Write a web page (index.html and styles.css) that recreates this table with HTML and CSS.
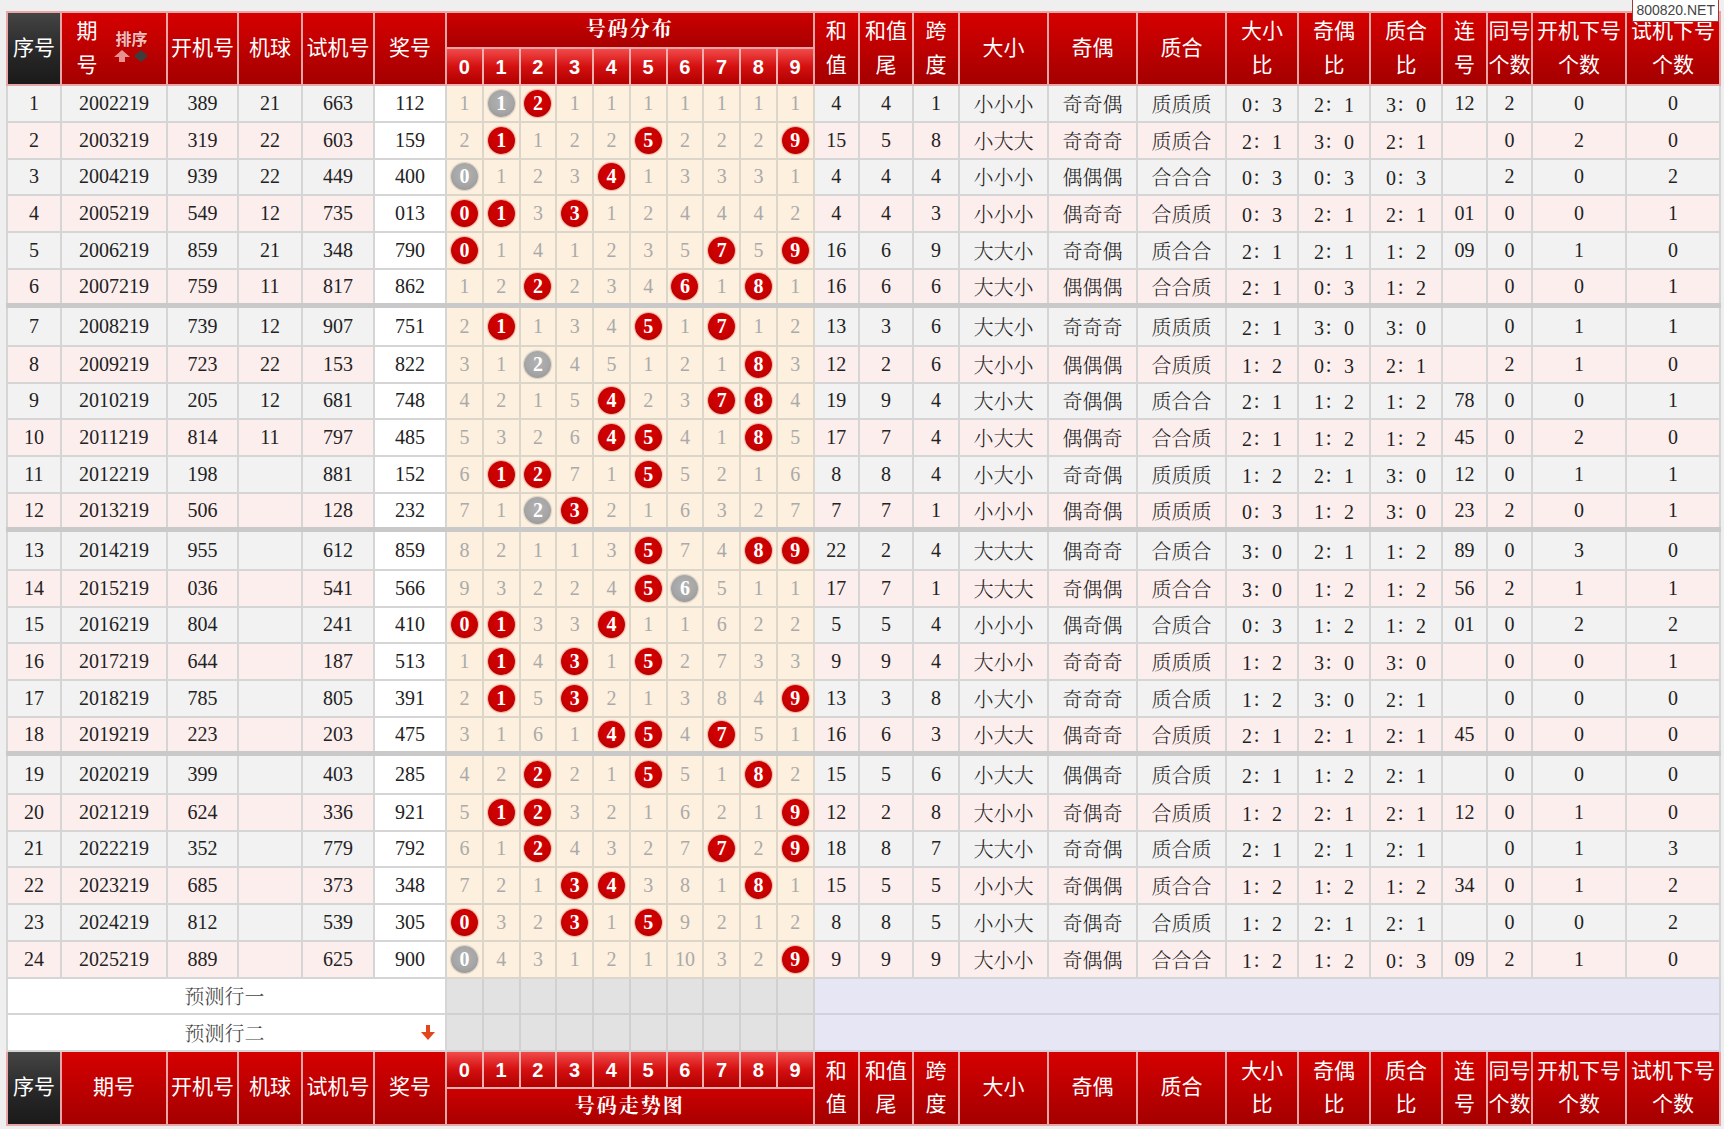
FILE: index.html
```html
<!DOCTYPE html>
<html lang="zh-CN">
<head>
<meta charset="utf-8">
<title>号码走势图</title>
<link rel="stylesheet" href="styles.css">
</head>
<body>
<div class="page">
  <div class="mark">800820.NET</div>
  <table class="chart">
    <colgroup>
      <col style="width:54px"><col style="width:106px"><col style="width:71px"><col style="width:64px"><col style="width:72px"><col style="width:72px">
      <col class="dc"><col class="dc"><col class="dc"><col class="dc"><col class="dc"><col class="dc"><col class="dc"><col class="dc"><col class="dc"><col class="dc">
      <col style="width:45.5px"><col style="width:54px"><col style="width:46px"><col style="width:89px"><col style="width:89px"><col style="width:89px">
      <col style="width:72px"><col style="width:72px"><col style="width:72px"><col style="width:45px"><col style="width:45px"><col style="width:94px"><col style="width:94px">
    </colgroup>
    <thead>
      <tr class="h1">
        <th rowspan="2" class="sn">序号</th>
        <th rowspan="2" class="qh">
          <div class="qh-in">
            <span class="qh-t">期<br>号</span>
            <span class="sort"><b>排序</b>
              <svg width="36" height="13" viewBox="0 0 36 13"><polygon points="0,7 8,0 16,7 11,7 11,12 5,12 5,7" fill="#e89090"/><polygon points="27,0 34,6 27,12 20,6" fill="#3d3d3d"/></svg>
            </span>
          </div>
        </th>
        <th rowspan="2">开机号</th>
        <th rowspan="2">机球</th>
        <th rowspan="2">试机号</th>
        <th rowspan="2">奖号</th>
        <th colspan="10" class="grp">号码分布</th>
        <th rowspan="2">和<br>值</th>
        <th rowspan="2">和值<br>尾</th>
        <th rowspan="2">跨<br>度</th>
        <th rowspan="2">大小</th>
        <th rowspan="2">奇偶</th>
        <th rowspan="2">质合</th>
        <th rowspan="2">大小<br>比</th>
        <th rowspan="2">奇偶<br>比</th>
        <th rowspan="2">质合<br>比</th>
        <th rowspan="2">连<br>号</th>
        <th rowspan="2">同号<br>个数</th>
        <th rowspan="2">开机下号<br>个数</th>
        <th rowspan="2">试机下号<br>个数</th>
      </tr>
      <tr class="h2">
        <th class="dg">0</th><th class="dg">1</th><th class="dg">2</th><th class="dg">3</th><th class="dg">4</th><th class="dg">5</th><th class="dg">6</th><th class="dg">7</th><th class="dg">8</th><th class="dg">9</th>
      </tr>
    </thead>
    <tbody>
      <tr class="r1"><td>1</td><td>2002219</td><td>389</td><td>21</td><td>663</td><td>112</td><td>1</td><td><b class="b g">1</b></td><td><b class="b">2</b></td><td>1</td><td>1</td><td>1</td><td>1</td><td>1</td><td>1</td><td>1</td><td>4</td><td>4</td><td>1</td><td>小小小</td><td>奇奇偶</td><td>质质质</td><td>0：3</td><td>2：1</td><td>3：0</td><td>12</td><td>2</td><td>0</td><td>0</td></tr>
      <tr class="r2"><td>2</td><td>2003219</td><td>319</td><td>22</td><td>603</td><td>159</td><td>2</td><td><b class="b">1</b></td><td>1</td><td>2</td><td>2</td><td><b class="b">5</b></td><td>2</td><td>2</td><td>2</td><td><b class="b">9</b></td><td>15</td><td>5</td><td>8</td><td>小大大</td><td>奇奇奇</td><td>质质合</td><td>2：1</td><td>3：0</td><td>2：1</td><td></td><td>0</td><td>2</td><td>0</td></tr>
      <tr class="r1"><td>3</td><td>2004219</td><td>939</td><td>22</td><td>449</td><td>400</td><td><b class="b g">0</b></td><td>1</td><td>2</td><td>3</td><td><b class="b">4</b></td><td>1</td><td>3</td><td>3</td><td>3</td><td>1</td><td>4</td><td>4</td><td>4</td><td>小小小</td><td>偶偶偶</td><td>合合合</td><td>0：3</td><td>0：3</td><td>0：3</td><td></td><td>2</td><td>0</td><td>2</td></tr>
      <tr class="r2"><td>4</td><td>2005219</td><td>549</td><td>12</td><td>735</td><td>013</td><td><b class="b">0</b></td><td><b class="b">1</b></td><td>3</td><td><b class="b">3</b></td><td>1</td><td>2</td><td>4</td><td>4</td><td>4</td><td>2</td><td>4</td><td>4</td><td>3</td><td>小小小</td><td>偶奇奇</td><td>合质质</td><td>0：3</td><td>2：1</td><td>2：1</td><td>01</td><td>0</td><td>0</td><td>1</td></tr>
      <tr class="r1"><td>5</td><td>2006219</td><td>859</td><td>21</td><td>348</td><td>790</td><td><b class="b">0</b></td><td>1</td><td>4</td><td>1</td><td>2</td><td>3</td><td>5</td><td><b class="b">7</b></td><td>5</td><td><b class="b">9</b></td><td>16</td><td>6</td><td>9</td><td>大大小</td><td>奇奇偶</td><td>质合合</td><td>2：1</td><td>2：1</td><td>1：2</td><td>09</td><td>0</td><td>1</td><td>0</td></tr>
      <tr class="r2"><td>6</td><td>2007219</td><td>759</td><td>11</td><td>817</td><td>862</td><td>1</td><td>2</td><td><b class="b">2</b></td><td>2</td><td>3</td><td>4</td><td><b class="b">6</b></td><td>1</td><td><b class="b">8</b></td><td>1</td><td>16</td><td>6</td><td>6</td><td>大大小</td><td>偶偶偶</td><td>合合质</td><td>2：1</td><td>0：3</td><td>1：2</td><td></td><td>0</td><td>0</td><td>1</td></tr>
      <tr class="r1 gs"><td>7</td><td>2008219</td><td>739</td><td>12</td><td>907</td><td>751</td><td>2</td><td><b class="b">1</b></td><td>1</td><td>3</td><td>4</td><td><b class="b">5</b></td><td>1</td><td><b class="b">7</b></td><td>1</td><td>2</td><td>13</td><td>3</td><td>6</td><td>大大小</td><td>奇奇奇</td><td>质质质</td><td>2：1</td><td>3：0</td><td>3：0</td><td></td><td>0</td><td>1</td><td>1</td></tr>
      <tr class="r2"><td>8</td><td>2009219</td><td>723</td><td>22</td><td>153</td><td>822</td><td>3</td><td>1</td><td><b class="b g">2</b></td><td>4</td><td>5</td><td>1</td><td>2</td><td>1</td><td><b class="b">8</b></td><td>3</td><td>12</td><td>2</td><td>6</td><td>大小小</td><td>偶偶偶</td><td>合质质</td><td>1：2</td><td>0：3</td><td>2：1</td><td></td><td>2</td><td>1</td><td>0</td></tr>
      <tr class="r1"><td>9</td><td>2010219</td><td>205</td><td>12</td><td>681</td><td>748</td><td>4</td><td>2</td><td>1</td><td>5</td><td><b class="b">4</b></td><td>2</td><td>3</td><td><b class="b">7</b></td><td><b class="b">8</b></td><td>4</td><td>19</td><td>9</td><td>4</td><td>大小大</td><td>奇偶偶</td><td>质合合</td><td>2：1</td><td>1：2</td><td>1：2</td><td>78</td><td>0</td><td>0</td><td>1</td></tr>
      <tr class="r2"><td>10</td><td>2011219</td><td>814</td><td>11</td><td>797</td><td>485</td><td>5</td><td>3</td><td>2</td><td>6</td><td><b class="b">4</b></td><td><b class="b">5</b></td><td>4</td><td>1</td><td><b class="b">8</b></td><td>5</td><td>17</td><td>7</td><td>4</td><td>小大大</td><td>偶偶奇</td><td>合合质</td><td>2：1</td><td>1：2</td><td>1：2</td><td>45</td><td>0</td><td>2</td><td>0</td></tr>
      <tr class="r1"><td>11</td><td>2012219</td><td>198</td><td></td><td>881</td><td>152</td><td>6</td><td><b class="b">1</b></td><td><b class="b">2</b></td><td>7</td><td>1</td><td><b class="b">5</b></td><td>5</td><td>2</td><td>1</td><td>6</td><td>8</td><td>8</td><td>4</td><td>小大小</td><td>奇奇偶</td><td>质质质</td><td>1：2</td><td>2：1</td><td>3：0</td><td>12</td><td>0</td><td>1</td><td>1</td></tr>
      <tr class="r2"><td>12</td><td>2013219</td><td>506</td><td></td><td>128</td><td>232</td><td>7</td><td>1</td><td><b class="b g">2</b></td><td><b class="b">3</b></td><td>2</td><td>1</td><td>6</td><td>3</td><td>2</td><td>7</td><td>7</td><td>7</td><td>1</td><td>小小小</td><td>偶奇偶</td><td>质质质</td><td>0：3</td><td>1：2</td><td>3：0</td><td>23</td><td>2</td><td>0</td><td>1</td></tr>
      <tr class="r1 gs"><td>13</td><td>2014219</td><td>955</td><td></td><td>612</td><td>859</td><td>8</td><td>2</td><td>1</td><td>1</td><td>3</td><td><b class="b">5</b></td><td>7</td><td>4</td><td><b class="b">8</b></td><td><b class="b">9</b></td><td>22</td><td>2</td><td>4</td><td>大大大</td><td>偶奇奇</td><td>合质合</td><td>3：0</td><td>2：1</td><td>1：2</td><td>89</td><td>0</td><td>3</td><td>0</td></tr>
      <tr class="r2"><td>14</td><td>2015219</td><td>036</td><td></td><td>541</td><td>566</td><td>9</td><td>3</td><td>2</td><td>2</td><td>4</td><td><b class="b">5</b></td><td><b class="b g">6</b></td><td>5</td><td>1</td><td>1</td><td>17</td><td>7</td><td>1</td><td>大大大</td><td>奇偶偶</td><td>质合合</td><td>3：0</td><td>1：2</td><td>1：2</td><td>56</td><td>2</td><td>1</td><td>1</td></tr>
      <tr class="r1"><td>15</td><td>2016219</td><td>804</td><td></td><td>241</td><td>410</td><td><b class="b">0</b></td><td><b class="b">1</b></td><td>3</td><td>3</td><td><b class="b">4</b></td><td>1</td><td>1</td><td>6</td><td>2</td><td>2</td><td>5</td><td>5</td><td>4</td><td>小小小</td><td>偶奇偶</td><td>合质合</td><td>0：3</td><td>1：2</td><td>1：2</td><td>01</td><td>0</td><td>2</td><td>2</td></tr>
      <tr class="r2"><td>16</td><td>2017219</td><td>644</td><td></td><td>187</td><td>513</td><td>1</td><td><b class="b">1</b></td><td>4</td><td><b class="b">3</b></td><td>1</td><td><b class="b">5</b></td><td>2</td><td>7</td><td>3</td><td>3</td><td>9</td><td>9</td><td>4</td><td>大小小</td><td>奇奇奇</td><td>质质质</td><td>1：2</td><td>3：0</td><td>3：0</td><td></td><td>0</td><td>0</td><td>1</td></tr>
      <tr class="r1"><td>17</td><td>2018219</td><td>785</td><td></td><td>805</td><td>391</td><td>2</td><td><b class="b">1</b></td><td>5</td><td><b class="b">3</b></td><td>2</td><td>1</td><td>3</td><td>8</td><td>4</td><td><b class="b">9</b></td><td>13</td><td>3</td><td>8</td><td>小大小</td><td>奇奇奇</td><td>质合质</td><td>1：2</td><td>3：0</td><td>2：1</td><td></td><td>0</td><td>0</td><td>0</td></tr>
      <tr class="r2"><td>18</td><td>2019219</td><td>223</td><td></td><td>203</td><td>475</td><td>3</td><td>1</td><td>6</td><td>1</td><td><b class="b">4</b></td><td><b class="b">5</b></td><td>4</td><td><b class="b">7</b></td><td>5</td><td>1</td><td>16</td><td>6</td><td>3</td><td>小大大</td><td>偶奇奇</td><td>合质质</td><td>2：1</td><td>2：1</td><td>2：1</td><td>45</td><td>0</td><td>0</td><td>0</td></tr>
      <tr class="r1 gs"><td>19</td><td>2020219</td><td>399</td><td></td><td>403</td><td>285</td><td>4</td><td>2</td><td><b class="b">2</b></td><td>2</td><td>1</td><td><b class="b">5</b></td><td>5</td><td>1</td><td><b class="b">8</b></td><td>2</td><td>15</td><td>5</td><td>6</td><td>小大大</td><td>偶偶奇</td><td>质合质</td><td>2：1</td><td>1：2</td><td>2：1</td><td></td><td>0</td><td>0</td><td>0</td></tr>
      <tr class="r2"><td>20</td><td>2021219</td><td>624</td><td></td><td>336</td><td>921</td><td>5</td><td><b class="b">1</b></td><td><b class="b">2</b></td><td>3</td><td>2</td><td>1</td><td>6</td><td>2</td><td>1</td><td><b class="b">9</b></td><td>12</td><td>2</td><td>8</td><td>大小小</td><td>奇偶奇</td><td>合质质</td><td>1：2</td><td>2：1</td><td>2：1</td><td>12</td><td>0</td><td>1</td><td>0</td></tr>
      <tr class="r1"><td>21</td><td>2022219</td><td>352</td><td></td><td>779</td><td>792</td><td>6</td><td>1</td><td><b class="b">2</b></td><td>4</td><td>3</td><td>2</td><td>7</td><td><b class="b">7</b></td><td>2</td><td><b class="b">9</b></td><td>18</td><td>8</td><td>7</td><td>大大小</td><td>奇奇偶</td><td>质合质</td><td>2：1</td><td>2：1</td><td>2：1</td><td></td><td>0</td><td>1</td><td>3</td></tr>
      <tr class="r2"><td>22</td><td>2023219</td><td>685</td><td></td><td>373</td><td>348</td><td>7</td><td>2</td><td>1</td><td><b class="b">3</b></td><td><b class="b">4</b></td><td>3</td><td>8</td><td>1</td><td><b class="b">8</b></td><td>1</td><td>15</td><td>5</td><td>5</td><td>小小大</td><td>奇偶偶</td><td>质合合</td><td>1：2</td><td>1：2</td><td>1：2</td><td>34</td><td>0</td><td>1</td><td>2</td></tr>
      <tr class="r1"><td>23</td><td>2024219</td><td>812</td><td></td><td>539</td><td>305</td><td><b class="b">0</b></td><td>3</td><td>2</td><td><b class="b">3</b></td><td>1</td><td><b class="b">5</b></td><td>9</td><td>2</td><td>1</td><td>2</td><td>8</td><td>8</td><td>5</td><td>小小大</td><td>奇偶奇</td><td>合质质</td><td>1：2</td><td>2：1</td><td>2：1</td><td></td><td>0</td><td>0</td><td>2</td></tr>
      <tr class="r2"><td>24</td><td>2025219</td><td>889</td><td></td><td>625</td><td>900</td><td><b class="b g">0</b></td><td>4</td><td>3</td><td>1</td><td>2</td><td>1</td><td>10</td><td>3</td><td>2</td><td><b class="b">9</b></td><td>9</td><td>9</td><td>9</td><td>大小小</td><td>奇偶偶</td><td>合合合</td><td>1：2</td><td>1：2</td><td>0：3</td><td>09</td><td>2</td><td>1</td><td>0</td></tr>
      <tr class="pr">
        <td colspan="6" class="pl"><div class="pl-in"><span></span><span>预测行一</span><span></span></div></td>
        <td class="pd"></td><td class="pd"></td><td class="pd"></td><td class="pd"></td><td class="pd"></td><td class="pd"></td><td class="pd"></td><td class="pd"></td><td class="pd"></td><td class="pd"></td>
        <td colspan="13" class="pv"></td>
      </tr>
      <tr class="pr">
        <td colspan="6" class="pl"><div class="pl-in"><span></span><span>预测行二</span><span class="pa"><svg width="14" height="16" viewBox="0 0 14 16"><polygon points="5,0 9,0 9,7 14,7 7,15 0,7 5,7" fill="#e2461a"/></svg></span></div></td>
        <td class="pd"></td><td class="pd"></td><td class="pd"></td><td class="pd"></td><td class="pd"></td><td class="pd"></td><td class="pd"></td><td class="pd"></td><td class="pd"></td><td class="pd"></td>
        <td colspan="13" class="pv"></td>
      </tr>
    </tbody>
    <tfoot>
      <tr class="f1">
        <th rowspan="2" class="sn">序号</th>
        <th rowspan="2">期号</th>
        <th rowspan="2">开机号</th>
        <th rowspan="2">机球</th>
        <th rowspan="2">试机号</th>
        <th rowspan="2">奖号</th>
        <th class="dg">0</th><th class="dg">1</th><th class="dg">2</th><th class="dg">3</th><th class="dg">4</th><th class="dg">5</th><th class="dg">6</th><th class="dg">7</th><th class="dg">8</th><th class="dg">9</th>
        <th rowspan="2">和<br>值</th>
        <th rowspan="2">和值<br>尾</th>
        <th rowspan="2">跨<br>度</th>
        <th rowspan="2">大小</th>
        <th rowspan="2">奇偶</th>
        <th rowspan="2">质合</th>
        <th rowspan="2">大小<br>比</th>
        <th rowspan="2">奇偶<br>比</th>
        <th rowspan="2">质合<br>比</th>
        <th rowspan="2">连<br>号</th>
        <th rowspan="2">同号<br>个数</th>
        <th rowspan="2">开机下号<br>个数</th>
        <th rowspan="2">试机下号<br>个数</th>
      </tr>
      <tr class="f2">
        <th colspan="10" class="grp">号码走势图</th>
      </tr>
    </tfoot>
  </table>
</div>
</body>
</html>
```

FILE: styles.css
```css
* { box-sizing: border-box; }
html, body { margin: 0; padding: 0; }
body {
  background: #efefef;
  font-family: "Liberation Serif", "Noto Serif CJK SC", "Noto Sans CJK SC", serif;
  color: #222;
}
.page {
  position: relative;
  padding: 11px 5px 5px 6px;
}
.mark {
  position: absolute;
  top: 0;
  right: 5px;
  z-index: 2;
  background: #fff;
  border: 1px solid #a33;
  border-top: 0;
  padding: 0 3px;
  font: 14px/21px "Liberation Sans", "DejaVu Sans", sans-serif;
  color: #444;
}
.chart {
  width: 1713px;
  table-layout: fixed;
  border-collapse: collapse;
}
.chart col.dc { width: 36.75px; }

/* header / footer cells */
.chart th {
  padding: 0 0 4px;
  text-align: center;
  vertical-align: middle;
  background: linear-gradient(#d60000, #b80000 60%, #a40000);
  color: #fff;
  font: 400 21px/33.5px "Noto Sans CJK SC", sans-serif;
  border: 2px solid #eaa6a6;
  white-space: nowrap;
}
.chart th.sn {
  background: linear-gradient(#444, #262626 60%, #1a1a1a);
}
.chart th.dg {
  padding: 0;
  background: linear-gradient(#f24a4a, #d41010 50%, #b00000);
  font: 700 20px/32px "Liberation Sans", sans-serif;
  border-color: #f0b0b0;
}
.chart th.grp {
  padding: 0 0 4px;
  font: 700 20px/30px "Noto Serif CJK SC", "Noto Sans CJK SC", serif;
  letter-spacing: 2px;
  background: linear-gradient(#cc0000, #a80000);
}
.h1 { height: 36px; }
.h2 { height: 37px; }
.f1 { height: 37px; }
.f2 { height: 37px; }

.qh-in {
  display: flex;
  align-items: center;
  justify-content: center;
  gap: 16px;
  padding-right: 2px;
}
.qh-t { line-height: 33.5px; }
.sort {
  display: flex;
  flex-direction: column;
  align-items: center;
  margin-top: -2px;
}
.sort b {
  font: 700 16px/19px "Noto Sans CJK SC", sans-serif;
  color: #f6bcbc;
  text-shadow: 0 0 2px #8a0000;
}
.sort svg { display: block; margin-top: 2px; }

/* body cells */
.chart td {
  padding: 0;
  text-align: center;
  vertical-align: middle;
  font-size: 20px;
  color: #222;
  border: 2px solid #d5d5d5;
  white-space: nowrap;
}
.chart tr.r1, .chart tr.r2, .chart tr.pr { height: 36.75px; }
.chart tr.gs { height: 40.25px; }
.chart tr.r1 td { background: #f2f2f2; }
.chart tr.r2 td { background: #fdeeee; }
.chart tr.r1 td:nth-child(6),
.chart tr.r2 td:nth-child(6) { background: #fff; }
.chart tr.r1 td:nth-child(n+7):nth-child(-n+16),
.chart tr.r2 td:nth-child(n+7):nth-child(-n+16) {
  background: #fdf0de;
  color: #aaa;
  border-color: #dcd5ca;
}
.chart tr.r1 td:nth-child(n+20):nth-child(-n+22),
.chart tr.r2 td:nth-child(n+20):nth-child(-n+22) { font-weight: 300; }
.chart tr.gs td { border-top: 5px solid #c9c9c9; }
.chart tr.gs td:nth-child(n+7):nth-child(-n+16) { border-top-color: #c9c9c9; }

.b {
  display: inline-block;
  width: 27px;
  height: 27px;
  border-radius: 50%;
  background: radial-gradient(circle at 50% 42%, #d60000 0%, #c80000 55%, #a00000 100%);
  box-shadow: 0 0 1px 1px rgba(230, 90, 90, 0.45);
  color: #fff;
  font: 700 20px/27px "Liberation Serif", serif;
  vertical-align: middle;
}
.b.g {
  background: radial-gradient(circle at 50% 42%, #b2b2b2 0%, #a6a6a6 55%, #8e8e8e 100%);
  box-shadow: 0 0 1px 1px rgba(160, 160, 160, 0.4);
}

/* prediction rows */
.chart td.pl {
  background: #fff;
  color: #444;
  font: 300 20px/30px "Noto Serif CJK SC", "Noto Sans CJK SC", sans-serif;
}
.pl-in {
  display: grid;
  grid-template-columns: 1fr auto 1fr;
  align-items: center;
  padding-right: 10px;
  padding-left: 6px;
}
.pa { justify-self: end; display: flex; }
.chart td.pd {
  background: #e2e2e2;
  border-color: #d0d0d0;
}
.chart td.pv {
  background: #e6e6f4;
  border-color: #d2d2dc;
}
```
